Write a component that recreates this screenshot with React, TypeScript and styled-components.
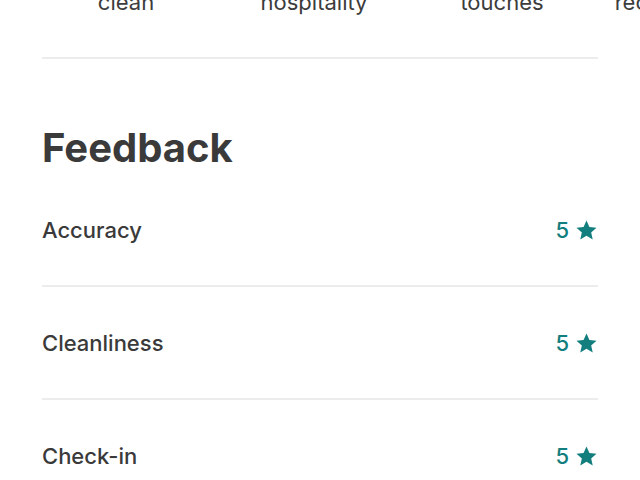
import React from "react";
import styled, { createGlobalStyle } from "styled-components";

const Global = createGlobalStyle`
  html, body {
    margin: 0;
    padding: 0;
    background: #ffffff;
    overflow: hidden;
  }
  body {
    font-family: "Inter", "Noto Sans", sans-serif;
    color: #3a3a3a;
  }
`;

const Page = styled.div`
  width: 640px;
  height: 480px;
  overflow: hidden;
  display: flex;
  flex-direction: column;
`;

/* highlight strip; the page is scrolled so only the last label line shows */
const Highlights = styled.div`
  display: flex;
  gap: 20px;
  padding: 0 42px;
  margin-top: -12px;
  white-space: nowrap;
`;

const Highlight = styled.div`
  flex: 0 0 168px;
  display: flex;
  justify-content: center;
  font-size: 22px;
  line-height: 28px;
  color: #3c3c3c;
`;

const Content = styled.div`
  padding: 0 42px;
  display: flex;
  flex-direction: column;
`;

const Divider = styled.hr<{ $gap?: number }>`
  margin: ${(p) => p.$gap ?? 0}px 0 0;
  border: 0;
  height: 2px;
  background: #ececec;
`;

const Heading = styled.h2`
  margin: 65px 0 0;
  font-size: 40px;
  line-height: 48px;
  font-weight: 700;
  color: #3a3a3a;
`;

const Row = styled.div<{ $first?: boolean }>`
  display: flex;
  align-items: center;
  justify-content: space-between;
  padding: ${(p) => (p.$first ? "44px" : "42px")} 0 41px;
  font-size: 22px;
  line-height: 28px;
  font-weight: 500;
`;

const Label = styled.span`
  color: #3a3a3a;
`;

const Score = styled.span`
  display: flex;
  align-items: center;
  gap: 6px;
  color: #137e7e;
`;

const Star = () => (
  <svg width="23" height="22" viewBox="0 0 24 24" aria-hidden="true">
    <path
      fill="#137e7e"
      d="M12 1.6l3.2 7.1 7.7.8-5.8 5.2 1.7 7.6L12 18.4l-6.8 3.9 1.7-7.6L1.1 9.5l7.7-.8z"
    />
  </svg>
);

const categories = [
  { name: "Accuracy", score: 5 },
  { name: "Cleanliness", score: 5 },
  { name: "Check-in", score: 5 },
];

export default function App() {
  return (
    <>
      <Global />
      <Page>
        <Highlights>
          <Highlight>clean</Highlight>
          <Highlight>hospitality</Highlight>
          <Highlight>touches</Highlight>
          <Highlight>recommended</Highlight>
        </Highlights>
        <Content>
          <Divider $gap={41} />
          <Heading>Feedback</Heading>
          {categories.map((c, i) => (
            <React.Fragment key={c.name}>
              {i > 0 && <Divider />}
              <Row $first={i === 0}>
                <Label>{c.name}</Label>
                <Score>
                  {c.score}
                  <Star />
                </Score>
              </Row>
            </React.Fragment>
          ))}
        </Content>
      </Page>
    </>
  );
}
